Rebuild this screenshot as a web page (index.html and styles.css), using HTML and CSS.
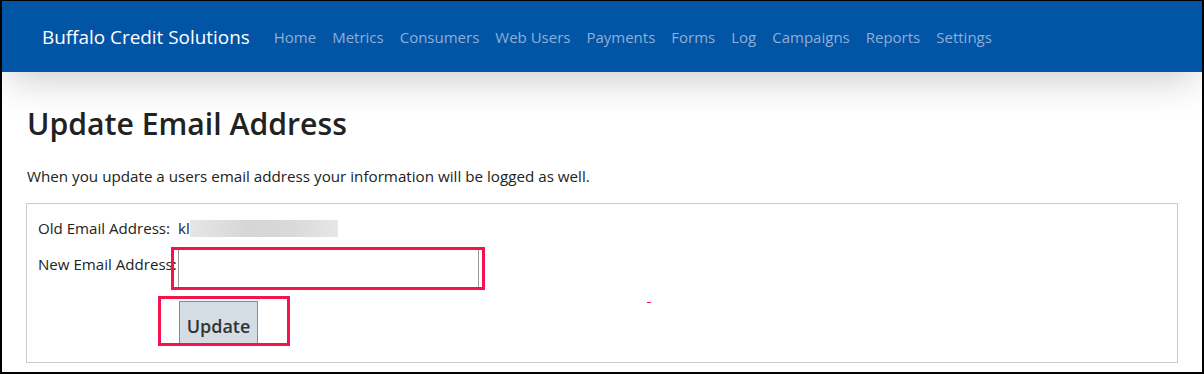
FILE: index.html
```html
<!DOCTYPE html>
<html lang="en">
<head>
  <meta charset="UTF-8">
  <title>Update Email Address</title>
  <link rel="stylesheet" href="styles.css">
</head>
<body>

  <div class="frame">
    <nav class="navbar">
      <a class="brand" href="#">Buffalo Credit Solutions</a>
      <ul class="nav-links">
        <li><a href="#">Home</a></li>
        <li><a href="#">Metrics</a></li>
        <li><a href="#">Consumers</a></li>
        <li><a href="#">Web Users</a></li>
        <li><a href="#">Payments</a></li>
        <li><a href="#">Forms</a></li>
        <li><a href="#">Log</a></li>
        <li><a href="#">Campaigns</a></li>
        <li><a href="#">Reports</a></li>
        <li><a href="#">Settings</a></li>
      </ul>
    </nav>

    <div class="container">
      <h1>Update Email Address</h1>
      <p class="intro">When you update a users email address your information will be logged as well.</p>

      <div class="panel">
        <div class="row">
          <span class="label">Old Email Address:</span>
          <span class="old-email">kl</span><span class="redacted"></span>
        </div>
        <div class="row">
          <label class="label" for="newEmail">New Email Address:</label><span class="marked marked-input"><input id="newEmail" type="text"></span>
        </div>
        <div class="row row-btn">
          <span class="marked marked-btn"><button type="button">Update</button></span>
        </div>
        <!-- stray annotation tick -->
        <span class="tick"></span>
      </div>
    </div>
  </div>

</body>
</html>
```

FILE: styles.css
```css
* {
  box-sizing: border-box;
}

body {
  margin: 0;
  font-family: "Open Sans", "Noto Sans", Arial, sans-serif;
  color: #222;
  background: #000;
}

.frame {
  width: 1204px;
  height: 374px;
  border-top: 1px solid #000;
  border-left: 2px solid #000;
  border-right: 2px solid #000;
  border-bottom: 2px solid #000;
  background: #fff;
  overflow: hidden;
}

.navbar {
  height: 71px;
  background-color: #0254a5;
  display: flex;
  align-items: center;
  padding-left: 40px;
  box-shadow: 0 12px 40px -6px rgba(0, 0, 0, 0.22);
  position: relative;
}

.brand {
  color: #fff;
  font-size: 18.9px;
  text-decoration: none;
  margin-right: 16px;
}

.nav-links {
  list-style: none;
  margin: 0;
  padding: 0;
  display: flex;
}

.nav-links a {
  display: block;
  padding: 0 8px;
  color: #8dafda;
  font-size: 15px;
  text-decoration: none;
}

.container {
  padding: 0 24px;
}

h1 {
  font-size: 30.2px;
  font-weight: 600;
  margin: 32px 0 0 1px;
  line-height: 40px;
  color: #222;
}

.intro {
  font-size: 15.2px;
  margin: 22px 0 0 1px;
  line-height: 20px;
}

.panel {
  margin-top: 17px;
  border: 1px solid #ccc;
  height: 160px;
  padding: 14px 11px 12px;
  position: relative;
  font-size: 15.1px;
}

.row {
  display: flex;
  align-items: center;
}

.old-email {
  margin-left: 8px;
}

.redacted {
  display: inline-block;
  width: 148px;
  height: 17px;
  background: linear-gradient(90deg, #e6e6e6, #d6d6d6 40%, #d9d9d9 70%, #e7e7e8);
}

.marked {
  position: relative;
  display: inline-block;
}

.marked::after {
  content: "";
  position: absolute;
  border: 3px solid #f2134f;
  pointer-events: none;
}

.marked-input {
  margin-top: 10px;
  margin-left: 1px;
}

.marked-input::after {
  top: -1px;
  bottom: -1px;
  left: -7px;
  right: -6px;
}

input {
  display: block;
  width: 301px;
  height: 41px;
  border: 1px solid #9a9a9a;
  background: #fff;
  font: inherit;
}

.row-btn {
  padding-left: 141px;
  margin-top: 12px;
}

.marked-btn::after {
  top: -5px;
  bottom: 0;
  left: -21px;
  right: -32px;
}

button {
  display: block;
  width: 79px;
  height: 45px;
  background-color: #d4dde3;
  border: 1px solid #8a8a8a;
  color: #333;
  font: inherit;
  font-size: 18px;
  font-weight: 600;
  padding: 4px 0 0;
}

.tick {
  position: absolute;
  left: 620px;
  top: 98px;
  width: 4px;
  height: 1px;
  background: #f2134f;
}
```
